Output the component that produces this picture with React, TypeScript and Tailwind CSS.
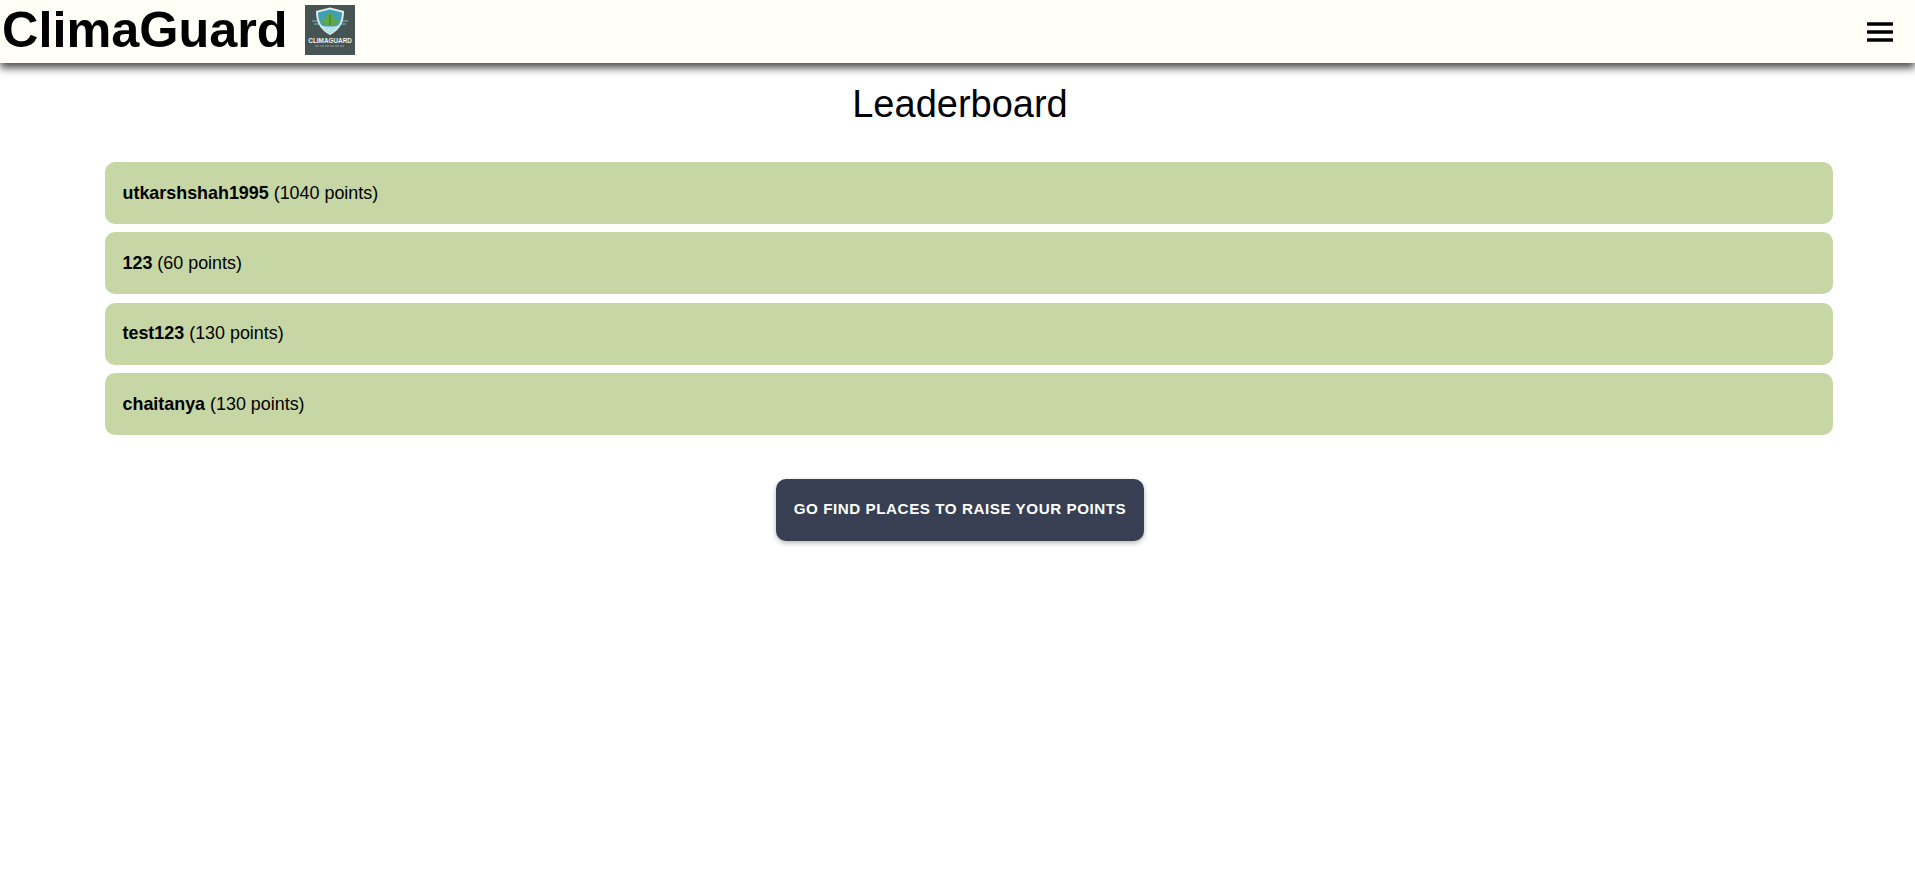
import React from "react";

const players = [
  { name: "utkarshshah1995", points: 1040 },
  { name: "123", points: 60 },
  { name: "test123", points: 130 },
  { name: "chaitanya", points: 130 },
];

const Logo = () => (
  <div className="w-[50px] h-[50px] bg-[#465553] flex flex-col items-center">
    <svg viewBox="0 0 50 31" className="w-[50px] h-[31px] shrink-0">
      <path d="M7 16h6M9 19h5M37 16h6M36 19h5" stroke="#6fc3d6" strokeWidth="1" />
      <path d="M25 2.5 L39 6 C39 16 36 24 25 30 C14 24 11 16 11 6 Z" fill="#e3ebe8" />
      <path d="M25 4.5 L37 7.5 C37 16 34 22.5 25 28 C16 22.5 13 16 13 7.5 Z" fill="#3e9fb6" />
      <path d="M16 20 C20 22 30 22 34 20 C32 24 29 26 25 28 C21 26 18 24 16 20 Z" fill="#b5e3ea" />
      <path d="M25 7.5 C28.5 10 30 12 29.5 15 C32 14 33.5 14 34 14 C33.5 18 30 21 25 21 C20 21 16.5 18 16 14 C16.5 14 18 14 20.5 15 C20 12 21.5 10 25 7.5 Z" fill="#62a648" />
      <path d="M25 10v10" stroke="#2f6d2c" strokeWidth="0.8" />
    </svg>
    <span className="mt-[1px] font-['Liberation_Sans',sans-serif] font-bold text-[6.4px] leading-[7px] text-[#f1f5f3]">CLIMAGUARD</span>
    <svg viewBox="0 0 30 2" className="w-[30px] h-[2px] mt-[1px]">
      <path d="M0 1h30" stroke="#8fa29c" strokeWidth="1.2" strokeDasharray="4 1" />
    </svg>
  </div>
);

const App = () => {
  return (
    <div className="min-h-[889px] bg-white text-black font-['Liberation_Sans',Arial,sans-serif]">
      <header className="h-[63px] bg-[#fffff8] flex items-center justify-between pl-[2px] pr-[22px] pb-[3px] shadow-[0_5px_8px_rgba(0,0,0,0.7)]">
        <div className="flex items-center gap-[17.5px]">
          <h1 className="text-[50.4px] leading-none font-bold">ClimaGuard</h1>
          <Logo />
        </div>
        <svg viewBox="0 0 26 20" className="w-[26px] h-[20px] mt-[3px]">
          <path d="M1 2h24M1 10h24M1 18h24" stroke="#000" strokeWidth="3.5" strokeLinecap="round" />
        </svg>
      </header>

      <main className="px-[105px] pt-[19px]">
        <h2 className="ml-[5px] text-[38px] leading-[44px] text-center mb-[36px]">Leaderboard</h2>
        <ul className="flex flex-col gap-[8.4px] mr-[-23px]">
          {players.map((p) => (
            <li
              key={p.name}
              className="h-[62px] flex items-center gap-[5px] px-[17.5px] rounded-[10px] bg-[#c6d6a4] text-[17.9px]"
            >
              <strong>{p.name}</strong>
              <span>({p.points} points)</span>
            </li>
          ))}
        </ul>
        <div className="ml-[5px] flex justify-center mt-[44px]">
          <button className="h-[62px] w-[368px] pb-[2px] rounded-[10px] bg-[#383f53] text-white text-[15.2px] font-bold uppercase tracking-[0.55px] shadow-[0_2px_5px_rgba(0,0,0,0.3)]">
            Go find places to raise your points
          </button>
        </div>
      </main>
    </div>
  );
};

export default App;
